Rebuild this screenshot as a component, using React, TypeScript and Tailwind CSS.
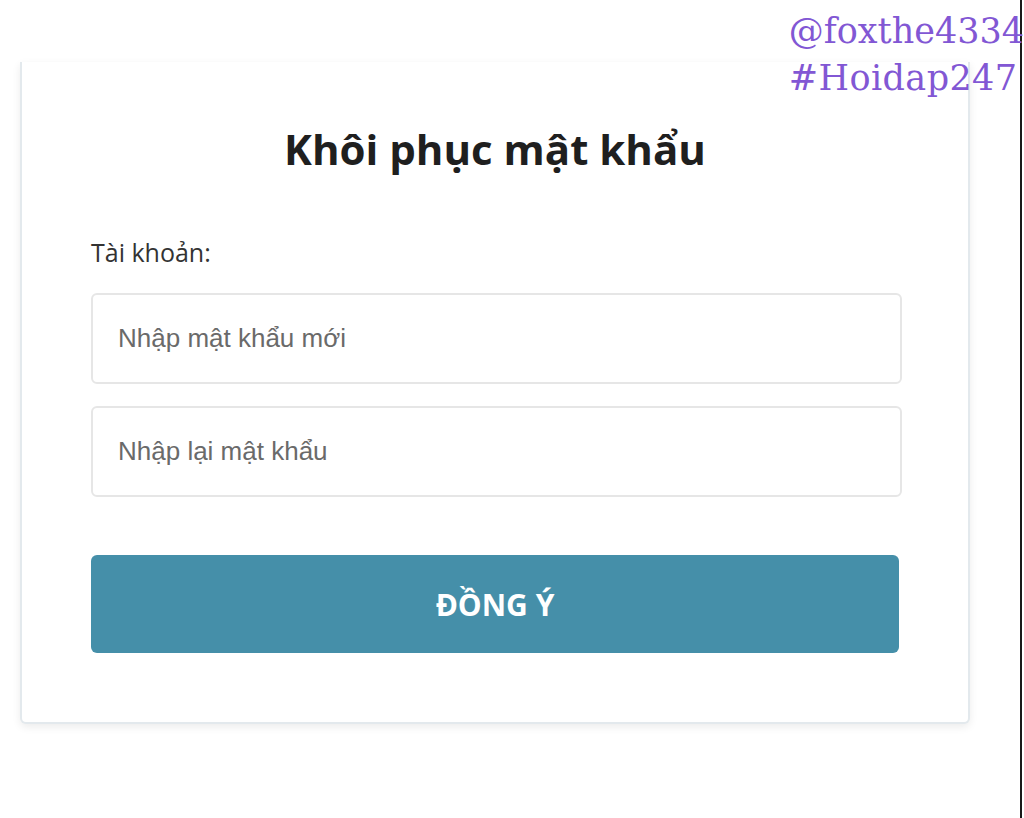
import React from 'react';

const Field: React.FC<{ placeholder: string }> = ({ placeholder }) => (
  <input
    type="password"
    placeholder={placeholder}
    className="w-[811px] h-[91px] rounded-[6px] border-2 border-[#e6e6e6] bg-white px-[25px] text-[26px] text-[#333] placeholder:text-[#6a6a6a] outline-none"
    style={{ fontFamily: '"Liberation Sans", Arial, sans-serif' }}
  />
);

export default function App() {
  return (
    <div className="relative w-[1024px] h-[818px] bg-white overflow-hidden">
      {/* right edge line */}
      <div className="absolute top-0 bottom-0 right-[2px] w-[2px] bg-[#1a1a1a]" />

      {/* watermark */}
      <div
        className="absolute top-[8px] right-0 text-[35px] leading-[47px] text-[#8257d4]"
        style={{ fontFamily: '"DejaVu Serif", serif' }}
      >
        <div>@foxthe4334</div>
        <div className="tracking-[0.4px]">#Hoidap247</div>
      </div>

      {/* card */}
      <div
        className="ml-[20px] mt-[62px] w-[950px] h-[662px] bg-white border-2 border-t-0 border-[#e3e9ed] rounded-b-[6px] shadow-[0_3px_8px_rgba(0,0,0,0.08)] px-[69px] pt-[61px]"
        style={{ fontFamily: '"Open Sans", sans-serif' }}
      >
        <h1 className="text-center text-[42px] leading-[52px] font-bold text-[#1f1f1f]">
          Khôi phục mật khẩu
        </h1>

        <div className="mt-[62px] text-[25px] leading-[30px] text-[#333]">Tài khoản:</div>

        <div className="mt-[26px] flex flex-col gap-[22px]">
          <Field placeholder="Nhập mật khẩu mới" />
          <Field placeholder="Nhập lại mật khẩu" />
        </div>

        <button className="mt-[58px] w-[808px] h-[98px] rounded-[6px] bg-[#458fa9] text-white text-[30px] font-bold">
          ĐỒNG Ý
        </button>
      </div>
    </div>
  );
}
